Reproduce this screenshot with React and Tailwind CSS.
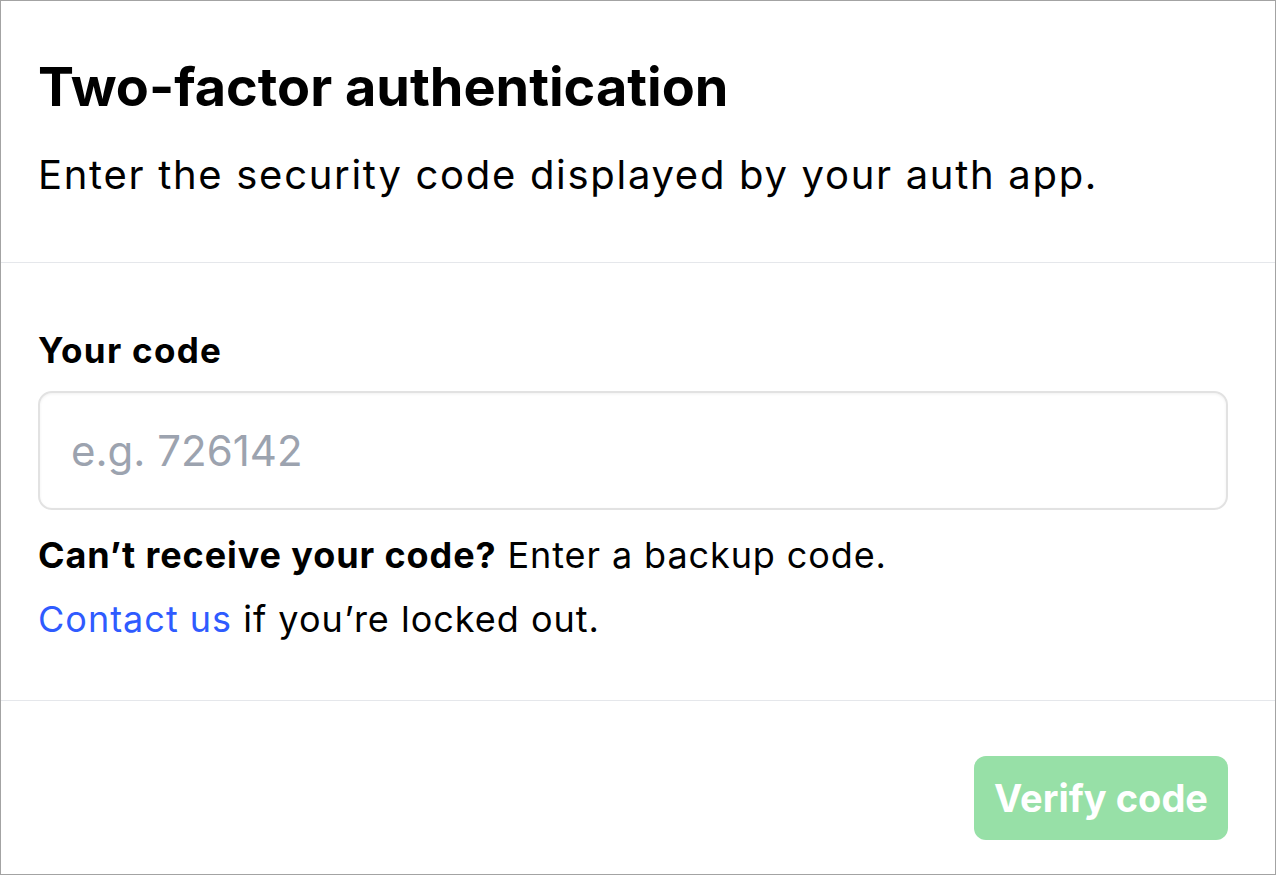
export default function App() {
  return (
    <div
      className="w-[1276px] h-[875px] border border-[#a3a3a3] bg-white flex flex-col text-black"
      style={{ fontFamily: "Inter, 'Noto Sans', sans-serif" }}
    >
      <div className="h-[262px] pl-[37px] pr-[47px] pt-[50px] border-b border-[#e5e7eb]">
        <h1 className="text-[54px] leading-[72px] font-bold">Two-factor authentication</h1>
        <p className="mt-[26px] text-[40px] leading-[52px] tracking-[1.7px]">Enter the security code displayed by your auth app.</p>
      </div>
      <div className="h-[438px] pl-[37px] pr-[47px] pt-[65px] border-b border-[#e5e7eb]">
        <label className="block text-[35px] leading-[44px] font-bold tracking-[1.3px]">Your code</label>
        <div className="mt-[19px] h-[119px] rounded-[14px] border-2 border-[#e2e2e2] shadow-[inset_0_1px_3px_rgba(0,0,0,0.06)] flex items-center px-[31px]">
          <span className="text-[42px] text-[#9ca3af]">e.g. 726142</span>
        </div>
        <p className="mt-[23px] text-[36px] leading-[44px] tracking-[0.9px]">
          <span className="font-bold">Can’t receive your code?</span> Enter a backup code.
        </p>
        <p className="mt-[20px] text-[36px] leading-[44px] tracking-[1px]">
          <span className="text-[#2f5bff]">Contact us</span> if you’re locked out.
        </p>
      </div>
      <div className="flex-1 flex justify-end items-start pt-[55px] pr-[47px]">
        <button className="w-[254px] h-[84px] rounded-[12px] bg-[#97e0a7] text-white text-[38px] font-bold">
          Verify code
        </button>
      </div>
    </div>
  );
}
